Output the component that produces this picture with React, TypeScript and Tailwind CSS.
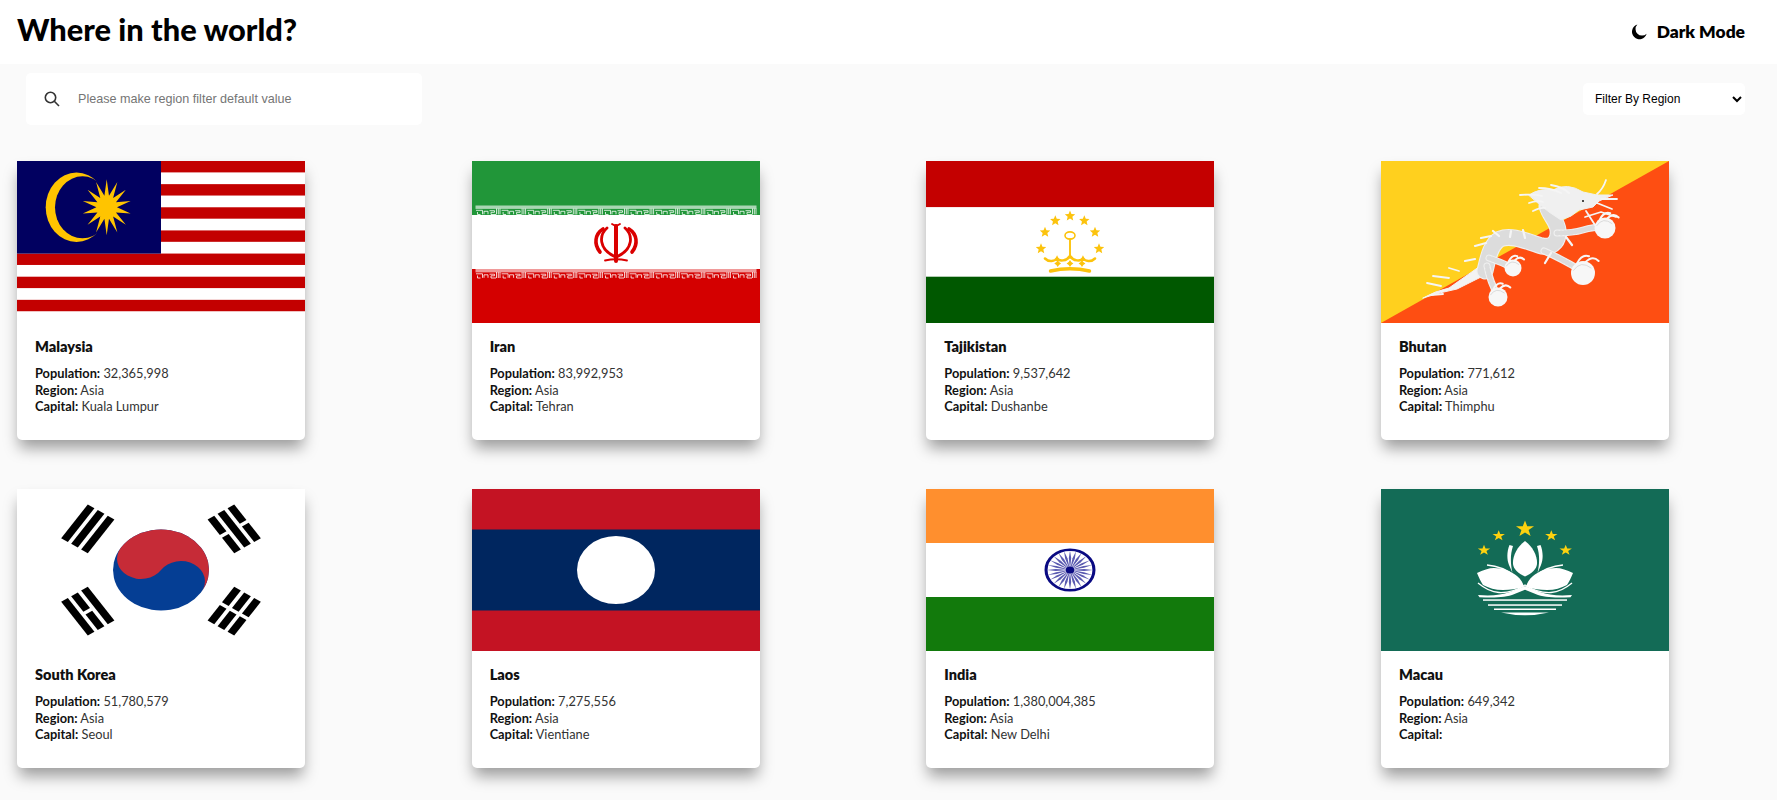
import { useMemo } from "react";

const FONT = "font-['Lato','Noto_Sans',sans-serif]";

function starPoints(cx: number, cy: number, rx: number, ry: number, n = 5, inner = 0.4, rot = -90) {
  const pts: string[] = [];
  for (let i = 0; i < n * 2; i++) {
    const a = ((rot + (i * 180) / n) * Math.PI) / 180;
    const k = i % 2 === 0 ? 1 : inner;
    pts.push(`${(cx + Math.cos(a) * rx * k).toFixed(2)},${(cy + Math.sin(a) * ry * k).toFixed(2)}`);
  }
  return pts.join(" ");
}

function Malaysia() {
  return (
    <>
      <rect width="288" height="162" fill="#fff" />
      {[0, 1, 2, 3, 4, 5, 6].map((i) => (
        <rect key={i} y={i * 23.14} width="288" height="11.4" fill="#c30000" />
      ))}
      <rect width="144" height="92.6" fill="#010060" />
      <ellipse cx="59.5" cy="46.3" rx="30.8" ry="34.7" fill="#ffc400" />
      <ellipse cx="65.5" cy="46.3" rx="27.5" ry="31" fill="#010060" />
      <polygon points={starPoints(89.7, 46.3, 24.5, 28, 14, 0.42)} fill="#ffc400" />
    </>
  );
}

function IranBand({ y, fill, pale }: { y: number; fill: string; pale: string }) {
  return (
    <g transform={`translate(3.5 ${y})`}>
      <rect width="281" height="3.4" fill={pale} />
      {Array.from({ length: 11 }).map((_, i) => (
        <g key={i} transform={`translate(${i * 25.6} 0)`} stroke={fill} strokeWidth="0.8" fill="none">
          <path d="M0.5 4.8h6.500v4M2 6.500v2.500h3M8.500 8.800v-3h4v3M14 5.200h5v1.600h-3.500v2.200h5M21 3v6M22.800 3v6M24.500 3v6" />
        </g>
      ))}
    </g>
  );
}

function Iran() {
  return (
    <>
      <rect width="288" height="54" fill="#219639" />
      <rect y="54" width="288" height="54" fill="#fff" />
      <rect y="108" width="288" height="54" fill="#d40000" />
      <IranBand y={44.5} fill="#fff" pale="#a9d6b3" />
      <IranBand y={108} fill="#fff" pale="#f09a9a" />
      <g fill="none" stroke="#da0000" strokeLinecap="round">
        <path d="M144 65v35" strokeWidth="4" />
        <path d="M140 63q4 3 8 0" strokeWidth="1.800" />
        <path d="M135 67c-8 7-8.500 21 7.500 28.500M153 67c8 7 8.500 21-7.500 28.500" strokeWidth="2.800" />
        <path d="M131 68c-8 5-9.500 15-3 23M157 68c8 5 9.500 15 3 23" strokeWidth="3.600" />
        <path d="M133 99.500q11-2.500 22 0" strokeWidth="1.800" />
      </g>
    </>
  );
}

function Tajikistan() {
  const stars: [number, number][] = [[144, 55], [129.3, 59.7], [158.3, 59.7], [119, 71.3], [169, 71.3], [115, 87.7], [173, 87.7]];
  return (
    <>
      <rect width="288" height="46.3" fill="#c40000" />
      <rect y="46.3" width="288" height="69.4" fill="#fff" />
      <rect y="115.700" width="288" height="46.300" fill="#005800" />
      {stars.map(([x, y]) => (
        <polygon key={x} points={starPoints(x, y, 5.500, 5.500, 5, 0.45)} fill="#fcc30d" />
      ))}
      <g fill="none" stroke="#fcc30d" strokeLinecap="round">
        <ellipse cx="144" cy="74.500" rx="5" ry="3.600" strokeWidth="1.600" />
        <path d="M144 78v17" strokeWidth="1.900" />
        <path d="M119 97.500c4 4 10 3 12-.5 2 4 10 3 13-2 3 5 11 6 13 2 2 3.500 8 4.500 12 .5" strokeWidth="2.500" />
        <path d="M124.500 110q19.500-4.500 39 0" strokeWidth="3.400" />
      </g>
      {[131.700, 144, 156].map((x) => (
        <polygon key={x} points={starPoints(x, 102.500, 3.400, 3.600, 4, 0.55)} fill="#fcc30d" />
      ))}
    </>
  );
}

const DRAGON_BODY = "M104 110c3-12 5-26 15-32 12-5 28 3 42 7 12 2 17-6 16-16-1-9-8-14-11-24";
const DRAGON_LEGS = "M163 90q18 8 38 20M176 72q16 0 26-3t22-3M106 105q3 16 11 30M108 97q12 4 24 10";

function Bhutan() {
  return (
    <>
      <rect width="288" height="162" fill="#fe4e12" />
      <polygon points="0,0 288,0 0,162" fill="#ffd01e" />
      <g fill="none" strokeLinecap="round" strokeLinejoin="round">
        <path d="M42 137q12-7 26-10l34-24 4 10-30 15q-16 3-34 9Z" fill="#f3f3f3" stroke="#f3f3f3" strokeWidth="1" />
        <path d="M60 125l-14-3M68 117l-16-2M78 110l-10-3M62 133l-12 1" stroke="#f5f5f5" strokeWidth="1.800" />
        <path d={DRAGON_BODY} stroke="#f0f0f0" strokeWidth="17" />
        <path d={DRAGON_BODY} stroke="#dcdcdc" strokeWidth="15" strokeDasharray="0.800 2.800" />
        <path d={DRAGON_LEGS} stroke="#f0f0f0" strokeWidth="7" />
        <path d={DRAGON_LEGS} stroke="#dcdcdc" strokeWidth="5" strokeDasharray="0.800 2.800" />
        <path d="M148 34q10-7 24-5 14-8 30 2l14 3h16l-14 6-6 6-14 3-8 6-10 4-12-8-10-8z" fill="#f0f0f0" stroke="#f0f0f0" strokeWidth="1" />
        <path d="M139 34q14-1 22 1M158 27q12 0 22 5M170 24q12 2 18 8M148 42q8-3 14-1M152 50q8-4 12-3" stroke="#f5f5f5" strokeWidth="1.800" />
        <path d="M216 33q6-5 9-14M220 38h16M216 42l15 6M204 56l16-5 15 5M205 50l9 14" stroke="#f5f5f5" strokeWidth="1.800" />
        <path d="M94 85l11-3M100 77l10-2M112 70l6 5M130 70l-1 6M142 69l2 8M84 100l10-2M170 92l-6 10M185 76l6 8" stroke="#f5f5f5" strokeWidth="2.200" />
      </g>
      {([[132, 107, 8.500], [117, 136, 9.500], [202, 112, 12], [224, 67, 10.500]] as const).map(([x, y, r]) => (
        <g key={x}>
          <circle cx={x} cy={y} r={r} fill="#f7f7f7" />
          <path d={`M${x - r * 0.8} ${y - r * 0.2}q${r * 0.6}-${r * 0.9} ${r * 1.5}-${r * 0.2}`} stroke="#cfcfcf" strokeWidth="0.700" fill="none" />
          <path d={`M${x - r * 0.5} ${y - r * 0.8}q${r * 0.4}-${r * 0.8} ${r}-${r * 0.6}M${x + r * 0.2} ${y - r * 0.9}q${r * 0.6}-${r * 0.6} ${r * 1.1}-${r * 0.1}`} stroke="#f7f7f7" strokeWidth="2" fill="none" strokeLinecap="round" />
        </g>
      ))}
      <circle cx="202" cy="40" r="1.100" fill="#222" />
    </>
  );
}

function Trigram({ angle, pattern }: { angle: number; pattern: boolean[] }) {
  // pattern: true = solid bar, false = bar broken in the middle, listed outwards
  return (
    <g transform={`rotate(${angle})`}>
      {pattern.map((solid, i) => {
        const x = 225 + i * 37.5;
        return solid ? (
          <rect key={i} x={x} y="-75" width="25" height="150" fill="#000" />
        ) : (
          <g key={i} fill="#000">
            <rect x={x} y="-75" width="25" height="69" />
            <rect x={x} y="6" width="25" height="69" />
          </g>
        );
      })}
    </g>
  );
}

function SouthKorea() {
  return (
    <>
      <rect width="288" height="162" fill="#fff" />
      <g transform="scale(0.32 0.27) translate(450 300)">
        <g transform="rotate(33.69)">
          <circle r="150" fill="#053e94" />
          <path d="M-150 0A150 150 0 0 1 150 0A75 75 0 0 0 0 0A75 75 0 0 1 -150 0Z" fill="#c62b37" />
        </g>
        <Trigram angle={213.69} pattern={[true, true, true]} />
        <Trigram angle={-33.69} pattern={[false, true, false]} />
        <Trigram angle={146.31} pattern={[true, false, true]} />
        <Trigram angle={33.69} pattern={[false, false, false]} />
      </g>
    </>
  );
}

function Laos() {
  return (
    <>
      <rect width="288" height="162" fill="#c41323" />
      <rect y="40.500" width="288" height="81" fill="#00265f" />
      <ellipse cx="144" cy="81" rx="39" ry="34" fill="#fff" />
    </>
  );
}

function India() {
  const spokes = Array.from({ length: 24 }, (_, i) => (i * 360) / 24);
  return (
    <>
      <rect width="288" height="54" fill="#ff8f2e" />
      <rect y="54" width="288" height="54" fill="#fff" />
      <rect y="108" width="288" height="54" fill="#127a0c" />
      <g transform="translate(144 81) scale(1.180 1)">
        <circle r="20.300" fill="#fff" stroke="#0a0a82" strokeWidth="2.600" />
        {spokes.map((a) => (
          <path key={a} d="M0 0L-1 -12 0 -19.500 1 -12Z" transform={`rotate(${a})`} fill="#5a5ab0" />
        ))}
        <circle r="3.600" fill="#0a0a82" />
      </g>
    </>
  );
}

function Macau() {
  return (
    <>
      <rect width="288" height="162" fill="#136b56" />
      <polygon points={starPoints(144, 40, 9.500, 8.500)} fill="#fdd20f" />
      {([[117.700, 46.700], [170.300, 46.700], [103, 61.300], [184.700, 61.300]] as const).map(([x, y]) => (
        <polygon key={x} points={starPoints(x, y, 6.500, 5.500)} fill="#fdd20f" />
      ))}
      <g fill="#fff">
        <path d="M144 52c-8 6-12.500 15-12 23 .5 5 5 9.500 12 12.500 7-3 11.500-7.500 12-12.500 .5-8-4-17-12-23Z" />
        <path d="M128.500 56c-2.500 6-3 14-.5 20l3.500 8c-2-9-2.500-18 .5-27ZM159.500 56c2.500 6 3 14 .5 20l-3.500 8c2-9 2.500-18-.5-27Z" />
        <path d="M96 84c6-3 12-5 17-5 9 0 17 3 23 8 4 3 6 7 7 11-7 2-14 3-21 3-8 0-14-2-20-5-2-3-4-7-6-12Z" />
        <path d="M192 84c-6-3-12-5-17-5-9 0-17 3-23 8-4 3-6 7-7 11 7 2 14 3 21 3 8 0 14-2 20-5 2-3 4-7 6-12Z" />
        <path d="M97 106c14 1 23 0 32-3l15-6 15 6c9 3 18 4 32 3l-1.500 2.200c-16 .8-26 .3-35-3.200l-10.500-4.200-10.500 4.200c-9 3.500-19 4-35 3.200Z" />
        <rect x="102" y="110.300" width="84" height="1.500" />
        <rect x="107" y="115.300" width="74" height="1.500" />
        <rect x="113" y="119.500" width="62" height="1.500" />
        <path d="M120 123.500h48q-24 5.500-48 0Z" />
      </g>
      <g fill="none" stroke="#fff" strokeWidth="1.300">
        <path d="M106 76c10 1 19 4 26 10M182 76c-10 1-19 4-26 10" />
        <path d="M97 94c6 5 13 9 21 9.500 10 .5 19-3 26-7.500 7 4.500 16 8 26 7.500 8-.5 15-4.500 21-9.500" />
      </g>
    </>
  );
}

type Country = { name: string; population: string; capital: string; flag: () => React.ReactNode };

const countries: Country[] = [
  { name: "Malaysia", population: "32,365,998", capital: "Kuala Lumpur", flag: Malaysia },
  { name: "Iran", population: "83,992,953", capital: "Tehran", flag: Iran },
  { name: "Tajikistan", population: "9,537,642", capital: "Dushanbe", flag: Tajikistan },
  { name: "Bhutan", population: "771,612", capital: "Thimphu", flag: Bhutan },
  { name: "South Korea", population: "51,780,579", capital: "Seoul", flag: SouthKorea },
  { name: "Laos", population: "7,275,556", capital: "Vientiane", flag: Laos },
  { name: "India", population: "1,380,004,385", capital: "New Delhi", flag: India },
  { name: "Macau", population: "649,342", capital: "", flag: Macau },
];

function Card({ country }: { country: Country }) {
  const Flag = country.flag;
  return (
    <div className="h-[279px] overflow-hidden rounded-b-[5px] bg-white shadow-[0_10px_15px_-2px_rgba(0,0,0,0.38)]">
      <svg viewBox="0 0 288 162" width="288" height="162" className="block">
        <Flag />
      </svg>
      <div className="px-[18px] pt-[15px]">
        <h2 className="text-[14.5px] leading-[18px] font-extrabold text-[#111]">{country.name}</h2>
        <div className="mt-[9px] text-[12.8px] leading-[16.5px] text-[#333]">
          <p><span className="font-bold text-[#111]">Population:</span> {country.population}</p>
          <p><span className="font-bold text-[#111]">Region:</span> Asia</p>
          <p><span className="font-bold text-[#111]">Capital:</span> {country.capital}</p>
        </div>
      </div>
    </div>
  );
}

export default function App() {
  const list = useMemo(() => countries, []);
  return (
    <main className={`min-h-screen bg-[#fafafa] ${FONT}`}>
      <header className="flex h-16 items-center justify-between bg-white pr-8 pl-[17px] text-black">
        <h1 className="mb-[3px] text-[30.8px] font-black">Where in the world?</h1>
        <button className="flex items-center gap-[9px] text-[17.4px] font-extrabold">
          <svg viewBox="0 0 16 16" width="17" height="17" fill="#000">
            <path d="M6 1.500A7 7 0 1 0 14.700 10A6 6 0 0 1 6 1.500Z" />
          </svg>
          Dark Mode
        </button>
      </header>

      <div className="flex items-center justify-between pt-[9px] pr-8 pl-[26px]">
        <div className="flex h-[52px] w-[396px] items-center rounded-[5px] bg-white pl-[18px]">
          <svg viewBox="0 0 16 16" width="16" height="16" fill="none" stroke="#333" strokeWidth="1.600">
            <circle cx="6.500" cy="6.500" r="5.200" />
            <path d="M10.300 10.300L15 15" />
          </svg>
          <input
            placeholder="Please make region filter default value"
            className="ml-[18px] w-[320px] font-['Liberation_Sans',sans-serif] text-[12.6px] outline-none placeholder:text-[#757575]"
          />
        </div>
        <div className="relative h-8 w-[162px]">
          <select className="h-8 w-full appearance-none rounded-[5px] bg-white pl-3 font-['Liberation_Sans',sans-serif] text-[12px] text-black outline-none">
            <option>Filter By Region</option>
          </select>
          <svg viewBox="0 0 12 12" width="12" height="12" fill="none" stroke="#000" strokeWidth="2" className="pointer-events-none absolute top-[10px] right-[2px]">
            <path d="M2 4l4 4 4-4" />
          </svg>
        </div>
      </div>

      <section className="grid grid-cols-[repeat(4,288px)] gap-x-[166.67px] gap-y-[49px] pt-9 pb-8 pl-[17px]">
        {list.map((c) => (
          <Card key={c.name} country={c} />
        ))}
      </section>
    </main>
  );
}
